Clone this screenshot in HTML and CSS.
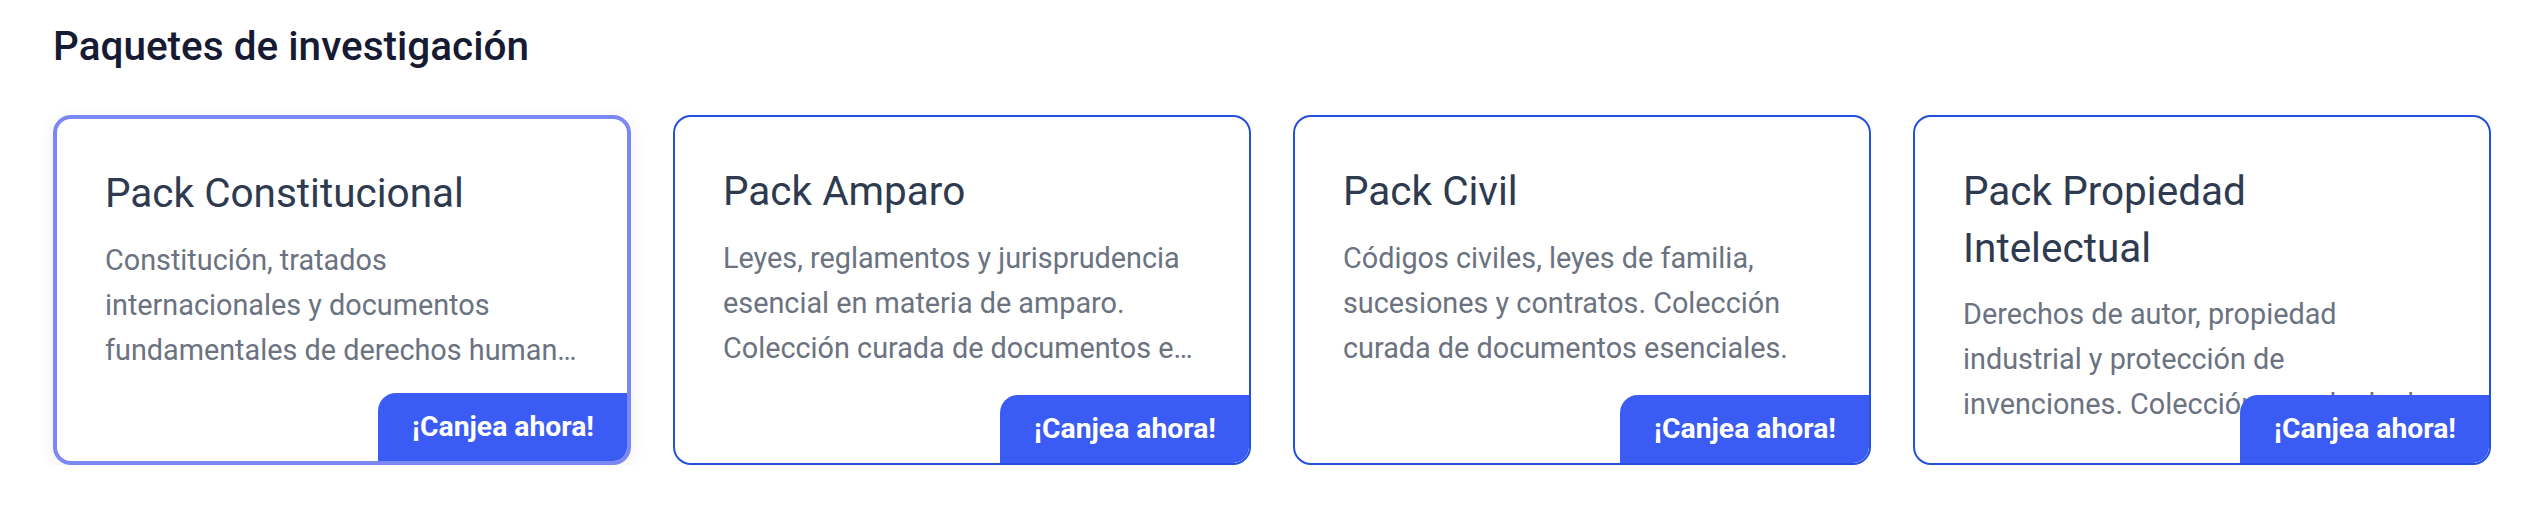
FILE: index.html
```html
<!DOCTYPE html>
<html lang="es">
<head>
<meta charset="utf-8">
<title>Paquetes de investigación</title>
<link rel="stylesheet" href="styles.css">
</head>
<body>
<section class="packs">
  <h2 class="packs-title">Paquetes de investigación</h2>
  <div class="packs-grid">
    <article class="pack pack--active">
      <h3 class="pack-name">Pack Constitucional</h3>
      <p class="pack-desc">Constitución, tratados internacionales y documentos fundamentales de derechos human…</p>
      <button class="pack-cta" type="button">¡Canjea ahora!</button>
    </article>
    <article class="pack">
      <h3 class="pack-name">Pack Amparo</h3>
      <p class="pack-desc">Leyes, reglamentos y jurisprudencia esencial en materia de amparo. Colección curada de documentos e…</p>
      <button class="pack-cta" type="button">¡Canjea ahora!</button>
    </article>
    <article class="pack">
      <h3 class="pack-name">Pack Civil</h3>
      <p class="pack-desc">Códigos civiles, leyes de familia, sucesiones y contratos. Colección curada de documentos esenciales.</p>
      <button class="pack-cta" type="button">¡Canjea ahora!</button>
    </article>
    <article class="pack">
      <h3 class="pack-name">Pack Propiedad Intelectual</h3>
      <p class="pack-desc">Derechos de autor, propiedad industrial y protección de invenciones. Colección curada de d…</p>
      <button class="pack-cta" type="button">¡Canjea ahora!</button>
    </article>
  </div>
</section>
</body>
</html>
```

FILE: styles.css
```css
* {
  box-sizing: border-box;
}

html, body {
  margin: 0;
  background: #ffffff;
  font-family: Roboto, "Liberation Sans", Arial, sans-serif;
}

.packs {
  padding: 23px 33px 0 53px;
}

.packs-title {
  margin: 0 0 45px;
  font-size: 40.5px;
  font-weight: 500;
  line-height: 47px;
  color: #161a33;
}

.packs-grid {
  display: grid;
  grid-template-columns: repeat(4, 578px);
  column-gap: 42px;
}

.pack {
  position: relative;
  height: 350px;
  padding: 46px 48px;
  background: #ffffff;
  border: 2px solid #2451dc;
  border-radius: 18px;
  overflow: hidden;
}

.pack--active {
  border: 4px solid #7c87f6;
  box-shadow: 0 4px 18px rgba(17, 24, 39, 0.07);
  overflow: visible;
}

.pack-name {
  margin: 0 0 16px;
  font-size: 40.5px;
  font-weight: 400;
  line-height: 56.7px;
  color: #2e3a50;
}

.pack-desc {
  margin: 0;
  font-size: 28.8px;
  line-height: 45px;
  color: #6b7280;
  display: -webkit-box;
  -webkit-box-orient: vertical;
  -webkit-line-clamp: 3;
  overflow: hidden;
}

.pack-cta {
  position: absolute;
  right: 0;
  bottom: 0;
  margin: 0;
  padding: 18px 33px 18px 34px;
  border: 0;
  border-radius: 18px 0 16px 0;
  background: #3b5bf5;
  color: #ffffff;
  font-family: Roboto, "Liberation Sans", Arial, sans-serif;
  font-size: 28.3px;
  font-weight: 700;
  line-height: 32px;
  cursor: pointer;
}

.pack--active .pack-cta {
  border-radius: 18px 0 14px 0;
}
```
